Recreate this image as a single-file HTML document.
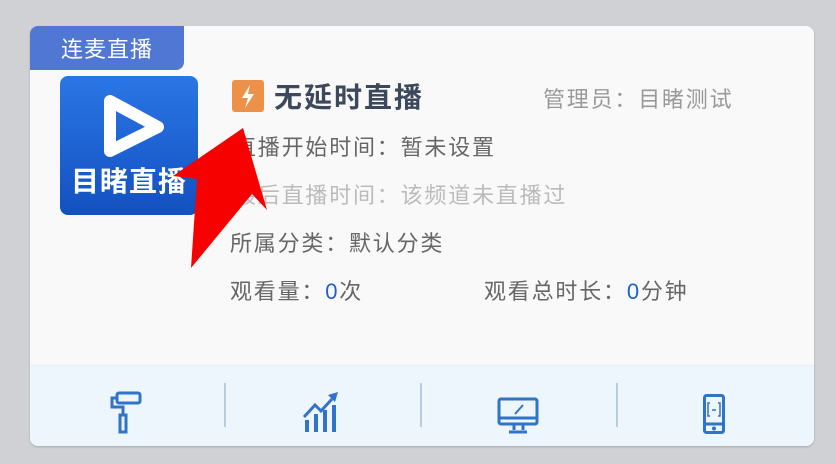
<!DOCTYPE html><html><head><meta charset="utf-8"><style>
body{margin:0;width:836px;height:464px;background:#cfd1d5;font-family:"Noto Sans CJK SC",sans-serif;position:relative;overflow:hidden}
.card{position:absolute;left:30px;top:26px;width:784px;height:420px;background:#f9f9f9;border-radius:8px;overflow:hidden;box-shadow:0 1px 2px rgba(0,0,0,.2)}
.tag{position:absolute;left:0;top:0;width:154px;height:44px;background:#4f77d3;color:#fff;font-size:22px;line-height:44px;text-align:center;border-radius:0 0 8px 0;letter-spacing:1px}
.logo{position:absolute;left:30px;top:50px;width:138px;height:139px;border-radius:8px;background:linear-gradient(#2a76e6,#1350c0)}
.t{position:absolute;font-size:22px;letter-spacing:1.8px;color:#666;white-space:nowrap;line-height:30px}
.foot{position:absolute;left:0;top:339px;width:784px;height:81px;background:#eef6fd;border-top:1px solid #e8eef4}
.div{position:absolute;top:17px;width:2px;height:44px;background:#b9cbe0}
.b{color:#1f5fd0;font-family:"Liberation Sans",sans-serif}
</style></head><body>
<div class="card">
<div class="tag">连麦直播</div>
<div class="logo"><svg width="138" height="139"><path d="M50 25 L50 75 L98 51 Z" fill="none" stroke="#fff" stroke-width="12" stroke-linejoin="round"/><text x="69" y="115" font-size="28" font-weight="bold" fill="#fff" text-anchor="middle" font-family="Noto Sans CJK SC,sans-serif" letter-spacing="1">目睹直播</text></svg></div>
<div style="position:absolute;left:202px;top:54px;width:32px;height:32px;background:#ec914a;border-radius:3px"><svg width="32" height="32"><path d="M18 5 L10 18 L16 18 L13 28 L22 14 L16 14 Z" fill="#fff"/></svg></div>
<div class="t" style="left:244px;top:55px;font-size:28px;letter-spacing:2px;font-weight:bold;color:#3c485c">无延时直播</div>
<div class="t" style="left:513px;top:57px;color:#999">管理员：目睹测试</div>
<div class="t" style="left:204px;top:105px">直播开始时间：暂未设置</div>
<div class="t" style="left:204px;top:153px;color:#bbb">最后直播时间：该频道未直播过</div>
<div class="t" style="left:200px;top:201px">所属分类：默认分类</div>
<div class="t" style="left:200px;top:249px">观看量：<span class="b">0</span>次</div>
<div class="t" style="left:454px;top:249px">观看总时长：<span class="b">0</span>分钟</div>
<div class="foot">
<div class="div" style="left:194px"></div><div class="div" style="left:390px"></div><div class="div" style="left:586px"></div>
<svg style="position:absolute;left:78px;top:24px" width="40" height="45" fill="none" stroke="#2f74c8" stroke-width="3"><rect x="9" y="3" width="23" height="10" rx="2"/><path d="M9 8 H4 V17 H15 V25"/><rect x="12" y="25" width="6" height="17"/></svg>
<svg style="position:absolute;left:272px;top:24px" width="44" height="45" fill="#2f74c8"><rect x="3" y="30" width="4" height="12"/><rect x="12" y="24" width="4" height="18"/><rect x="21" y="20" width="4" height="22"/><rect x="30" y="15" width="4" height="27"/><path d="M2 27 L13 15 L19 21 L30 9" stroke="#2f74c8" stroke-width="3" fill="none"/><path d="M26 5 L36 2 L33 12 Z"/></svg>
<svg style="position:absolute;left:466px;top:25px" width="46" height="44" fill="none" stroke="#2f74c8" stroke-width="3"><rect x="3" y="8" width="38" height="25" rx="2"/><path d="M3 27 H41 M18 33 V39 M27 33 V39 M13 41 H31"/><path d="M19 23 L27 14" stroke-width="2"/></svg>
<svg style="position:absolute;left:668px;top:24px" width="34" height="46" fill="none" stroke="#2f74c8"><rect x="6.5" y="5.5" width="19" height="37" rx="2" stroke-width="3"/><path d="M6 34 H26" stroke-width="3"/><path d="M12 13 H10 V26 H12 M20 13 H22 V26 H20 M14 20 H18" stroke-width="1.5"/><circle cx="16" cy="38.5" r="1.5" fill="#2f74c8"/></svg>
</div>
</div>
<svg style="position:absolute;left:0;top:0" width="836" height="464"><polygon points="243,128 267,210 252,194 191,268 197,179 173,176" fill="#f70000"/></svg>
</body></html>
